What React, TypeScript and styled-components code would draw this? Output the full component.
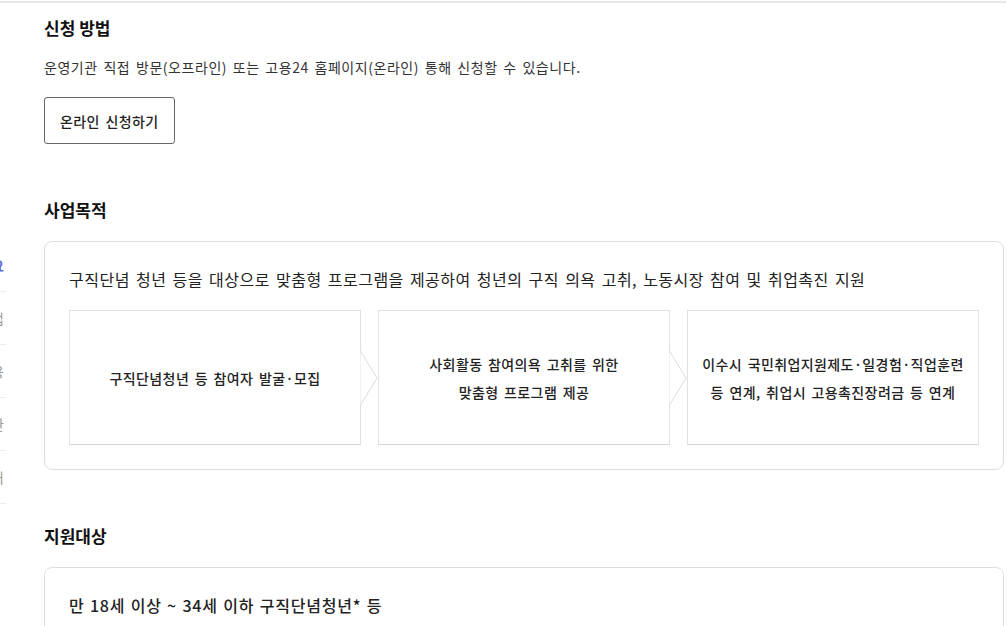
import React, { FC } from 'react';
import styled, { createGlobalStyle } from 'styled-components';

const GlobalStyle = createGlobalStyle`
    * {
        box-sizing: border-box;
    }
    body {
        margin: 0;
        background: #ffffff;
        font-family: "Noto Sans CJK KR", "Noto Sans", sans-serif;
        color: #222;
    }
`

const TopRule = styled.div`
    height: 2px;
    margin-top: 1px;
    background: #e6e6e6;
    width: 1006px;
`

const PageRow = styled.div`
    display: flex;
    align-items: flex-start;
`

const Sidebar = styled.nav`
    width: 6px;
    flex-shrink: 0;
    overflow: hidden;
    padding-top: 236px;
`

const SideItem = styled.div<{ $active?: boolean }>`
    height: 53px;
    border-bottom: 1px solid #ececec;
    display: flex;
    align-items: center;
    justify-content: flex-end;
    width: 124px;
    margin-left: -118px;
    padding-right: 2px;
    font-size: 14px;
    color: ${({ $active }) => ($active ? '#5a63d8' : '#999')};
    font-weight: ${({ $active }) => ($active ? 700 : 400)};
    white-space: nowrap;
`

const Main = styled.main`
    width: 960px;
    margin-left: 38px;
    padding-top: 12px;
`

const Section = styled.section`
    & + & {
        margin-top: 53px;
    }
`

const Heading = styled.h2`
    margin: 0;
    font-size: 17px;
    line-height: 26px;
    font-weight: 700;
    color: #111;
`

const Description = styled.p`
    margin: 15px 0 0;
    font-size: 14px;
    line-height: 22px;
    letter-spacing: 0.55px;
    word-spacing: 2px;
    color: #333;
`

const OutlineButton = styled.button`
    margin-top: 19px;
    height: 47px;
    padding: 0 15px;
    background: #fff;
    border: 1px solid #666;
    border-radius: 3px;
    font-family: inherit;
    font-size: 14px;
    font-weight: 500;
    letter-spacing: 0.4px;
    word-spacing: 2px;
    color: #222;
    cursor: pointer;
`

const Card = styled.div`
    margin-top: 18px;
    border: 1px solid #dedede;
    border-radius: 8px;
    padding: 25px 24px 24px;
    background: #fff;
`

const CardText = styled.p<{ $strong?: boolean }>`
    margin: 0;
    font-size: 16px;
    line-height: 24px;
    color: #222;
    font-weight: ${({ $strong }) => ($strong ? 500 : 400)};
    letter-spacing: ${({ $strong }) => ($strong ? '0.8px' : '0.5px')};
    word-spacing: ${({ $strong }) => ($strong ? '1px' : '2px')};
`

const StepGrid = styled.div`
    margin-top: 19px;
    display: grid;
    grid-template-columns: repeat(3, 1fr);
    gap: 17px;
`

const StepBox = styled.div`
    position: relative;
    height: 135px;
    border: 1px solid #e0e0e0;
    border-bottom-color: #d4d4d4;
    background: #fff;
    display: flex;
    align-items: center;
    justify-content: center;
    text-align: center;
    font-size: 14px;
    line-height: 28px;
    font-weight: 500;
    letter-spacing: 0.4px;
    word-spacing: 2px;
    color: #222;
`

const Chevron = styled.svg`
    position: absolute;
    right: -18px;
    top: 50%;
    transform: translateY(-50%);
`

const steps = [
    ['구직단념청년 등 참여자 발굴·모집'],
    ['사회활동 참여의욕 고취를 위한', '맞춤형 프로그램 제공'],
    ['이수시 국민취업지원제도·일경험·직업훈련', '등 연계, 취업시 고용촉진장려금 등 연계'],
];

const sideItems = ['사업개요', '신청방법', '지원내용', '운영기관', '문의처'];

const App: FC = () => {
    return (
        <>
            <GlobalStyle />
            <TopRule />
            <PageRow>
                <Sidebar>
                    {sideItems.map((label, i) => (
                        <SideItem key={label} $active={i === 0}>
                            {label}
                        </SideItem>
                    ))}
                </Sidebar>
                <Main>
                    <Section>
                        <Heading>신청 방법</Heading>
                        <Description>
                            운영기관 직접 방문(오프라인) 또는 고용24 홈페이지(온라인) 통해 신청할 수 있습니다.
                        </Description>
                        <OutlineButton>온라인 신청하기</OutlineButton>
                    </Section>

                    <Section>
                        <Heading>사업목적</Heading>
                        <Card>
                            <CardText>
                                구직단념 청년 등을 대상으로 맞춤형 프로그램을 제공하여 청년의 구직 의욕 고취, 노동시장 참여 및 취업촉진 지원
                            </CardText>
                            <StepGrid>
                                {steps.map((lines, i) => (
                                    <StepBox key={i}>
                                        <div>
                                            {lines.map((line) => (
                                                <div key={line}>{line}</div>
                                            ))}
                                        </div>
                                        {i < steps.length - 1 && (
                                            <Chevron width="18" height="56" viewBox="0 0 18 56">
                                                <polyline
                                                    points="0.5,1 17,28 0.5,55"
                                                    fill="#fff"
                                                    stroke="#dcdcdc"
                                                    strokeWidth="1"
                                                />
                                            </Chevron>
                                        )}
                                    </StepBox>
                                ))}
                            </StepGrid>
                        </Card>
                    </Section>

                    <Section>
                        <Heading>지원대상</Heading>
                        <Card>
                            <CardText $strong>만 18세 이상 ~ 34세 이하 구직단념청년* 등</CardText>
                        </Card>
                    </Section>
                </Main>
            </PageRow>
        </>
    );
}

export default App;
